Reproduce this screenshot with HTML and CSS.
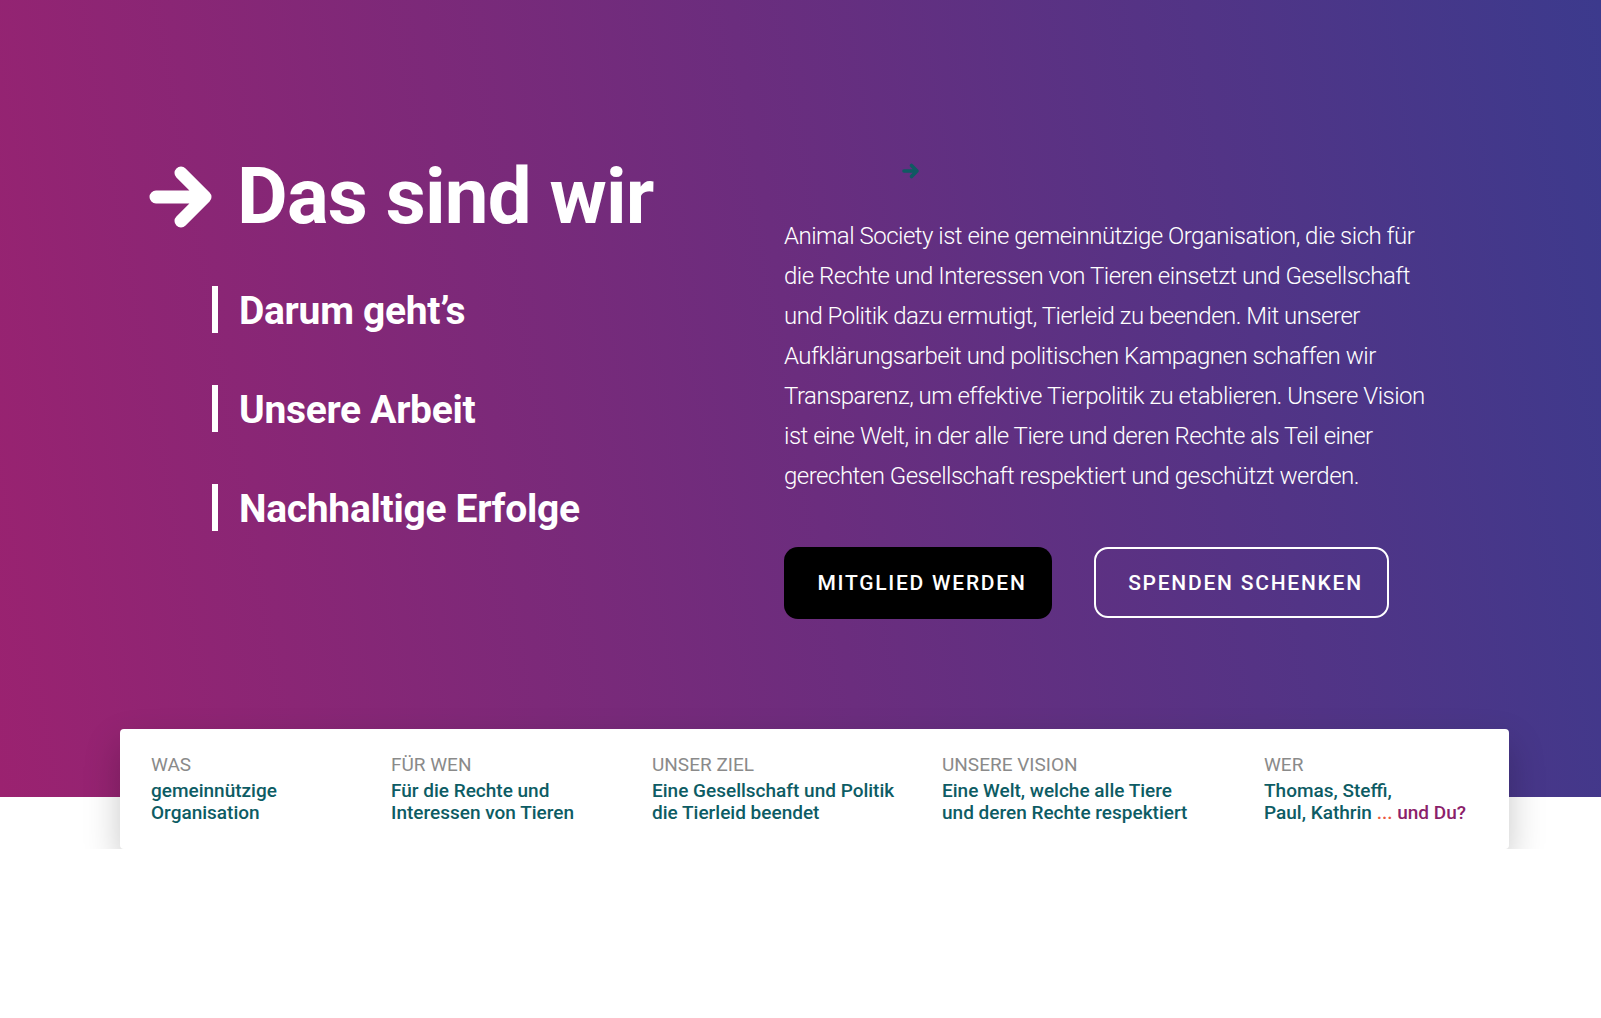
FILE: index.html
```html
<!DOCTYPE html>
<html lang="de">
<head>
<meta charset="utf-8">
<title>Das sind wir</title>
<link rel="stylesheet" href="styles.css">
</head>
<body>
<section class="hero">
  <div class="hero-inner">
    <div class="hero-left">
      <h1 class="title">
        <svg class="title-arrow" viewBox="0 0 66 64" width="66" height="64" aria-hidden="true">
          <path d="M8 32 H56 M33 8 L57 32 L33 56" fill="none" stroke="#fff" stroke-width="13" stroke-linecap="round" stroke-linejoin="round"/>
        </svg>
        <span>Das sind wir</span>
      </h1>
      <ul class="subnav">
        <li>Darum geht’s</li>
        <li>Unsere Arbeit</li>
        <li>Nachhaltige Erfolge</li>
      </ul>
    </div>
    <div class="hero-right">
      <div class="deco">
        <svg viewBox="0 0 20 20" width="20" height="20" aria-hidden="true">
          <path d="M3 10 H16 M10.5 4.5 L16 10 L10.5 15.5" fill="none" stroke="#0f5a62" stroke-width="3.6" stroke-linecap="round" stroke-linejoin="round"/>
        </svg>
      </div>
      <p class="intro">Animal Society ist eine gemeinnützige Organisation, die sich für die Rechte und Interessen von Tieren einsetzt und Gesellschaft und Politik dazu ermutigt, Tierleid zu beenden. Mit unserer Aufklärungsarbeit und politischen Kampagnen schaffen wir Transparenz, um effektive Tierpolitik zu etablieren. Unsere Vision ist eine Welt, in der alle Tiere und deren Rechte als Teil einer gerechten Gesellschaft respektiert und geschützt werden.</p>
      <div class="buttons">
        <a class="btn btn-dark" href="#">MITGLIED WERDEN</a>
        <a class="btn btn-outline" href="#">SPENDEN SCHENKEN</a>
      </div>
    </div>
  </div>
</section>
<section class="facts-wrap">
  <div class="facts">
    <div class="fact">
      <div class="label">WAS</div>
      <div class="value">gemeinnützige<br>Organisation</div>
    </div>
    <div class="fact">
      <div class="label">FÜR WEN</div>
      <div class="value">Für die Rechte und<br>Interessen von Tieren</div>
    </div>
    <div class="fact">
      <div class="label">UNSER ZIEL</div>
      <div class="value">Eine Gesellschaft und Politik<br>die Tierleid beendet</div>
    </div>
    <div class="fact">
      <div class="label">UNSERE VISION</div>
      <div class="value">Eine Welt, welche alle Tiere<br>und deren Rechte respektiert</div>
    </div>
    <div class="fact">
      <div class="label">WER</div>
      <div class="value">Thomas, Steffi,<br>Paul, Kathrin <span class="dots">...</span> <span class="you">und Du?</span></div>
    </div>
  </div>
</section>
</body>
</html>
```
FILE: styles.css
```css
* { box-sizing: border-box; }
html, body { margin: 0; padding: 0; background: #fff; }
body { font-family: Roboto, "Noto Sans", "Liberation Sans", sans-serif; color: #fff; }

.hero {
  height: 797px;
  background: linear-gradient(80deg, #9b2270 0%, #6b2d7e 50%, #3c3a8d 100%);
}
.hero-inner {
  display: flex;
  padding: 157px 0 0 148px;
}
.hero-left { width: 636px; flex: none; }
.hero-right { width: 662px; flex: none; }

.title {
  margin: 0;
  display: flex;
  align-items: center;
  gap: 23px;
  font-size: 78px;
  line-height: 80px;
  font-weight: 700;
  letter-spacing: -0.8px;
}
.title-arrow { display: block; flex: none; }

.subnav {
  list-style: none;
  margin: 49px 0 0 64px;
  padding: 0;
  display: flex;
  flex-direction: column;
  gap: 52px;
}
.subnav li {
  border-left: 6px solid #fff;
  padding-left: 21px;
  height: 47px;
  line-height: 50px;
  font-size: 39px;
  font-weight: 700;
  letter-spacing: -0.3px;
}

.deco { margin: 4px 0 0 117px; height: 20px; }
.deco svg { display: block; }

.intro {
  margin: 35px 0 0;
  font-size: 24px;
  line-height: 40px;
  font-weight: 300;
  letter-spacing: -0.5px;
}

.buttons {
  display: flex;
  gap: 42px;
  margin-top: 51px;
}
.btn {
  display: flex;
  align-items: center;
  justify-content: center;
  height: 72px;
  padding-left: 8px;
  border-radius: 14px;
  color: #fff;
  text-decoration: none;
  font-size: 21px;
  font-weight: 500;
  letter-spacing: 1.75px;
}
.btn-dark { background: #000; width: 268px; }
.btn-outline { border: 2px solid #fff; width: 295px; height: 71px; }

.facts-wrap { padding: 0 92px 0 120px; }
.facts {
  position: relative;
  margin-top: -68px;
  height: 120px;
  background: #fff;
  border-radius: 4px;
  box-shadow: 0 16px 36px rgba(0, 0, 0, 0.22);
  padding: 25px 20px 0 31px;
  display: grid;
  grid-template-columns: 240px 261px 290px 322px auto;
}
.label {
  font-size: 19px;
  line-height: 22px;
  color: #8a8a8a;
  font-weight: 400;
  margin-bottom: 4px;
}
.value {
  font-size: 19px;
  line-height: 22px;
  color: #0d5c64;
  font-weight: 500;
}
.dots { color: #ec5a3f; }
.you { color: #8c1f6b; }
```
